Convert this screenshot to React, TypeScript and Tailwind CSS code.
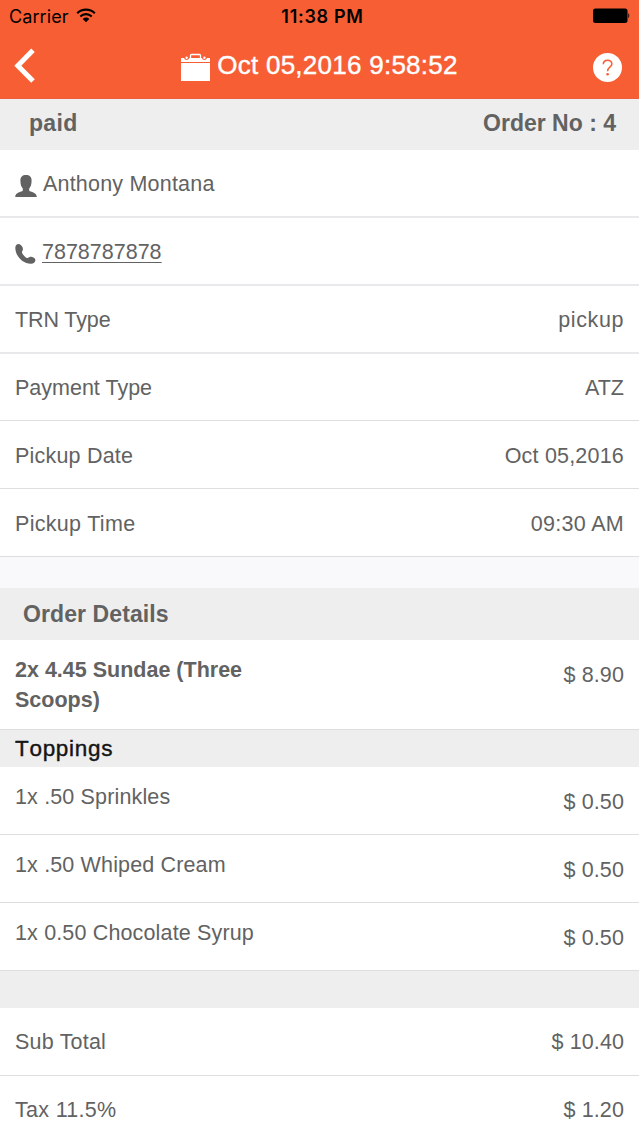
import type { ReactNode } from "react";

type RowProps = { className: string; label: ReactNode; value?: ReactNode };

function Row({ className, label, value }: RowProps) {
  return (
    <div className={"flex justify-between px-[15px] " + className}>
      <span>{label}</span>
      {value && <span>{value}</span>}
    </div>
  );
}

function Topping({ label, value }: { label: string; value: string }) {
  return (
    <div className="flex h-[68px] justify-between border-b border-[#dededf] px-[15px] leading-[30px]">
      <span className="pt-[15px] tracking-[0.15px]">{label}</span>
      <span className="pt-[20px] tracking-[0.1px]">{value}</span>
    </div>
  );
}

function WifiIcon() {
  return (
    <svg className="mt-[8px] ml-[7px] h-[15px] w-[20px]" viewBox="0 0 20 15" fill="none" stroke="#000" strokeWidth="2.1">
      <path d="M1.2 5.2C6 .4 14 .4 18.800 5.200" />
      <path d="M4.300 8.400C7.500 5.400 12.500 5.400 15.700 8.400" />
      <path d="M6.700 10.900C8.600 9.100 11.400 9.100 13.300 10.900L10 14.200Z" fill="#000" stroke="none" />
    </svg>
  );
}

export default function App() {
  return (
    <div className="flex h-[1136px] w-[639px] flex-col overflow-hidden bg-white font-['Liberation_Sans',sans-serif] text-[21.5px] tracking-[0.2px] text-[#626262]">
      <header className="box-content h-[98px] shrink-0 border-b border-[#ed5f3b] bg-[#f75e34]">
        <div className="grid h-[32px] grid-cols-3 font-[Inter,sans-serif] text-[18px] leading-[33px] tracking-[0.1px] text-black">
          <div className="flex pl-[9px]">
            <span>Carrier</span>
            <WifiIcon />
          </div>
          <span className="pl-[6px] text-center font-semibold tracking-[0.7px]">11:38 PM</span>
          <div className="flex justify-end pt-[8px] pr-[9px]">
            <svg className="h-[16px] w-[37px]" viewBox="0 0 37 16">
              <rect x="0" y="0.500" width="34.500" height="14.500" rx="2.500" />
              <path d="M35.300 5q2 2.700 0 5.400z" />
            </svg>
          </div>
        </div>
        <div className="flex h-[66px] items-start justify-between pr-[17px] pl-[14px] text-white">
          <svg className="mt-[16px] h-[36px] w-[22px]" viewBox="0 0 22 36" fill="none" stroke="currentColor" strokeWidth="5">
            <path d="M19 2.300L3.800 17.700L19 33" />
          </svg>
          <div className="flex items-start pl-[9px]">
            <svg className="mt-[21px] h-[29px] w-[31px]" viewBox="0 0 31 29" fill="currentColor">
              <path d="M1 5h3a2.700 2.700 0 0 0 5.200 0h12.600a2.700 2.700 0 0 0 5.200 0h3v4H1z" />
              <rect x="1" y="10" width="29" height="18" />
              <path d="M10.500 5V2.500q0-1 1-1h8q1 0 1 1V5" fill="none" stroke="currentColor" strokeWidth="1.300" />
              <circle cx="6.600" cy="4.700" r="1.200" />
              <circle cx="24.400" cy="4.700" r="1.200" />
            </svg>
            <h1 className="pt-[16px] pl-[6px] text-[26px] leading-[34px] tracking-[0.26px] whitespace-nowrap [-webkit-text-stroke:0.4px_white]">
              Oct 05,2016 9:58:52
            </h1>
          </div>
          <svg className="mt-[21px] h-[29px] w-[29px]" viewBox="0 0 29 29">
            <circle cx="14.500" cy="14.500" r="14.500" fill="currentColor" />
            <path d="M10.300 11.300C10.300 5.900 18.900 5.900 18.900 10.900C18.900 14 14.600 13.800 14.600 18.300" fill="none" stroke="#f75e34" strokeWidth="1.500" />
            <circle cx="14.600" cy="21.200" r="1.300" fill="#f75e34" />
          </svg>
        </div>
      </header>

      <section className="flex h-[51px] shrink-0 justify-between bg-[#eeeeef] pr-[23px] pl-[29px] text-[23px] leading-[48px] font-bold">
        <span className="tracking-[0.3px]">paid</span>
        <span className="tracking-normal">Order No : 4</span>
      </section>

      <section className="shrink-0 leading-[68px]">
        <Row
          className="h-[68px] border-b-2 border-[#e9e9eb]"
          label={
            <span className="flex items-start">
              <svg className="mt-[25px] mr-[6px] h-[22px] w-[22px]" viewBox="0 0 22 22" fill="currentColor">
                <path d="M11 0C7.500 0 5.200 1.900 5.400 5.800 5.500 9.600 6.200 11.800 7.800 13.600V15.800C6.400 17.200.5 17 .2 22h21.600c-.3-5-6.200-4.800-7.600-6.200v-2.200c1.600-1.800 2.300-4 2.400-7.800C16.800 1.900 14.500 0 11 0z" />
              </svg>
              <span>Anthony Montana</span>
            </span>
          }
        />
        <Row
          className="h-[68px] border-b-2 border-[#e9e9eb]"
          label={
            <span className="flex items-start">
              <svg className="mt-[26px] mr-[6px] h-[20px] w-[21px]" viewBox="0 0 21 20" fill="currentColor">
                <path d="M4.500.2C2.300-.4.200 1.200.3 4 .6 12 7.500 19.600 15.800 19.800c2.600.1 4.600-1.500 4.600-3.500 0-2.500-3.500-3.700-5.700-3.400-1.400.2-1.700 1.400-2.800 1.100-1.700-.5-4.400-3.900-4.900-5.600-.3-1.100.7-1.500.9-2.900C8.200 3.600 6.600.8 4.500.2z" />
              </svg>
              <span className="tracking-normal underline decoration-1 underline-offset-[3px]">7878787878</span>
            </span>
          }
        />
        <Row
          className="h-[68px] border-b-2 border-[#e9e9eb]"
          label={<span className="tracking-[-0.1px]">TRN Type</span>}
          value={<span className="tracking-[0.6px]">pickup</span>}
        />
        <Row
          className="h-[67px] border-b border-[#dededf]"
          label={<span className="tracking-normal">Payment Type</span>}
          value={<span className="tracking-normal">ATZ</span>}
        />
        <Row className="h-[68px] border-b border-[#dededf] leading-[70px]" label="Pickup Date" value="Oct 05,2016" />
        <Row
          className="h-[68px] border-b border-[#dededf] leading-[70px]"
          label={<span className="tracking-[0.3px]">Pickup Time</span>}
          value={<span className="tracking-[0.3px]">09:30 AM</span>}
        />
      </section>

      <div className="h-[31px] shrink-0 bg-[#f9f9fb]" />
      <h2 className="h-[52px] shrink-0 bg-[#eeeeef] pl-[23px] text-[23px] leading-[52px] font-bold tracking-[0.1px]">Order Details</h2>

      <section className="flex h-[90px] shrink-0 justify-between border-b border-[#dededf] px-[15px]">
        <span className="w-[240px] pt-[16px] leading-[29.500px] font-bold tracking-normal">2x 4.45 Sundae (Three Scoops)</span>
        <span className="pt-[20px] leading-[30px] tracking-[0.1px]">$ 8.90</span>
      </section>
      <h3 className="h-[37px] shrink-0 bg-[#eeeeef] pl-[15px] text-[22.500px] leading-[37px] tracking-[0.7px] text-[#151515] [font-kerning:none] [-webkit-text-stroke:0.4px_#151515]">
        Toppings
      </h3>
      <section className="shrink-0">
        <Topping label="1x .50 Sprinkles" value="$ 0.50" />
        <Topping label="1x .50 Whiped Cream" value="$ 0.50" />
        <Topping label="1x 0.50 Chocolate Syrup" value="$ 0.50" />
      </section>
      <div className="h-[37px] shrink-0 bg-[#eeeeef]" />
      <section className="shrink-0 leading-[68px]">
        <Row className="h-[68px] border-b border-[#dededf]" label="Sub Total" value={<span className="tracking-[0.1px]">$ 10.40</span>} />
        <Row
          className="h-[68px]"
          label={<span className="tracking-[0.3px]">Tax 11.5%</span>}
          value={<span className="tracking-[0.1px]">$ 1.20</span>}
        />
      </section>
    </div>
  );
}
